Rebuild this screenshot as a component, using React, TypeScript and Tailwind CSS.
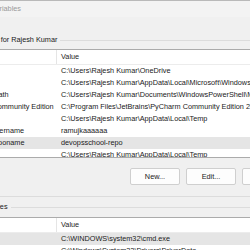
import React from "react";

interface EnvVar {
  name: string;
  value: string;
  selected?: boolean;
}

const userVars: EnvVar[] = [
  { name: "OneDrive", value: "C:\\Users\\Rajesh Kumar\\OneDrive" },
  { name: "Path", value: "C:\\Users\\Rajesh Kumar\\AppData\\Local\\Microsoft\\WindowsApps;" },
  { name: "PSModulePath", value: "C:\\Users\\Rajesh Kumar\\Documents\\WindowsPowerShell\\Modules" },
  { name: "PyCharm Community Edition", value: "C:\\Program Files\\JetBrains\\PyCharm Community Edition 2021.1\\bin;" },
  { name: "TEMP", value: "C:\\Users\\Rajesh Kumar\\AppData\\Local\\Temp" },
  { name: "GITHUB_username", value: "ramujkaaaaaa" },
  { name: "GITHUB_reponame", value: "devopsschool-repo", selected: true },
  { name: "TMP", value: "C:\\Users\\Rajesh Kumar\\AppData\\Local\\Temp" },
];

const systemVars: EnvVar[] = [
  { name: "ComSpec", value: "C:\\WINDOWS\\system32\\cmd.exe", selected: true },
  { name: "DriverData", value: "C:\\Windows\\System32\\Drivers\\DriverData" },
];

function VarList({ vars, height }: { vars: EnvVar[]; height: string }) {
  return (
    <div className={`border-y border-[#ababab] bg-white overflow-hidden ${height}`}>
      <div className="flex h-[15px] items-center border-b border-[#ececec]">
        <div className="h-full w-[101px] border-r border-[#e5e5e5] pl-[4px]">Variable</div>
        <div className="pl-[4px] text-[#1e1e1e]">Value</div>
      </div>
      {vars.map((v) => (
        <div
          key={v.name}
          className={`flex h-[12px] items-center whitespace-nowrap ${v.selected ? "bg-[#e5e5e5]" : ""}`}
        >
          <div className="w-[101px] shrink-0 overflow-hidden pl-[4px]">{v.name}</div>
          <div className="pl-[4px]">{v.value}</div>
        </div>
      ))}
    </div>
  );
}

function GroupLabel({ text }: { text: string }) {
  return (
    <div className="-ml-[4px] flex h-[10px] items-center">
      <div className="shrink-0 whitespace-nowrap">{text}</div>
      <div className="ml-[3px] h-px flex-1 bg-[#dcdcdc]" />
    </div>
  );
}

export default function App() {
  return (
    <div
      className="h-[250px] w-[250px] overflow-hidden bg-[#f0f0f0] text-[7.3px] leading-[12px] text-[#1a1a1a]"
      style={{ fontFamily: '"Liberation Sans", Arial, sans-serif' }}
    >
      <div className="flex h-[17px] items-center border-t border-[#b9b9b9] bg-[#f3f3f3]">
        <div className="flex w-[21px] shrink-0 justify-end whitespace-nowrap text-[#9a9a9a]">
          Environment Variables
        </div>
      </div>

      <div className="-ml-[44px] w-[400px]">
        <div className="pt-[18px]">
          <GroupLabel text="User variables for Rajesh Kumar" />
        </div>
        <div className="mt-[4px]">
          <VarList vars={userVars} height="h-[109px]" />
        </div>
        <div className="flex gap-[6px] pl-[174px] pt-[10px]">
          {["New...", "Edit...", "Delete..."].map((b) => (
            <button
              key={b}
              className="h-[17px] w-[50px] rounded-[2px] border border-[#cfcfcf] bg-[#fdfdfd] text-center"
            >
              {b}
            </button>
          ))}
        </div>
        <div className="mt-[11px] h-px bg-[#dcdcdc]" />
        <div className="pt-[5px]">
          <GroupLabel text="System variables" />
        </div>
        <div className="mt-[5px]">
          <VarList vars={systemVars} height="h-[40px]" />
        </div>
      </div>
    </div>
  );
}
